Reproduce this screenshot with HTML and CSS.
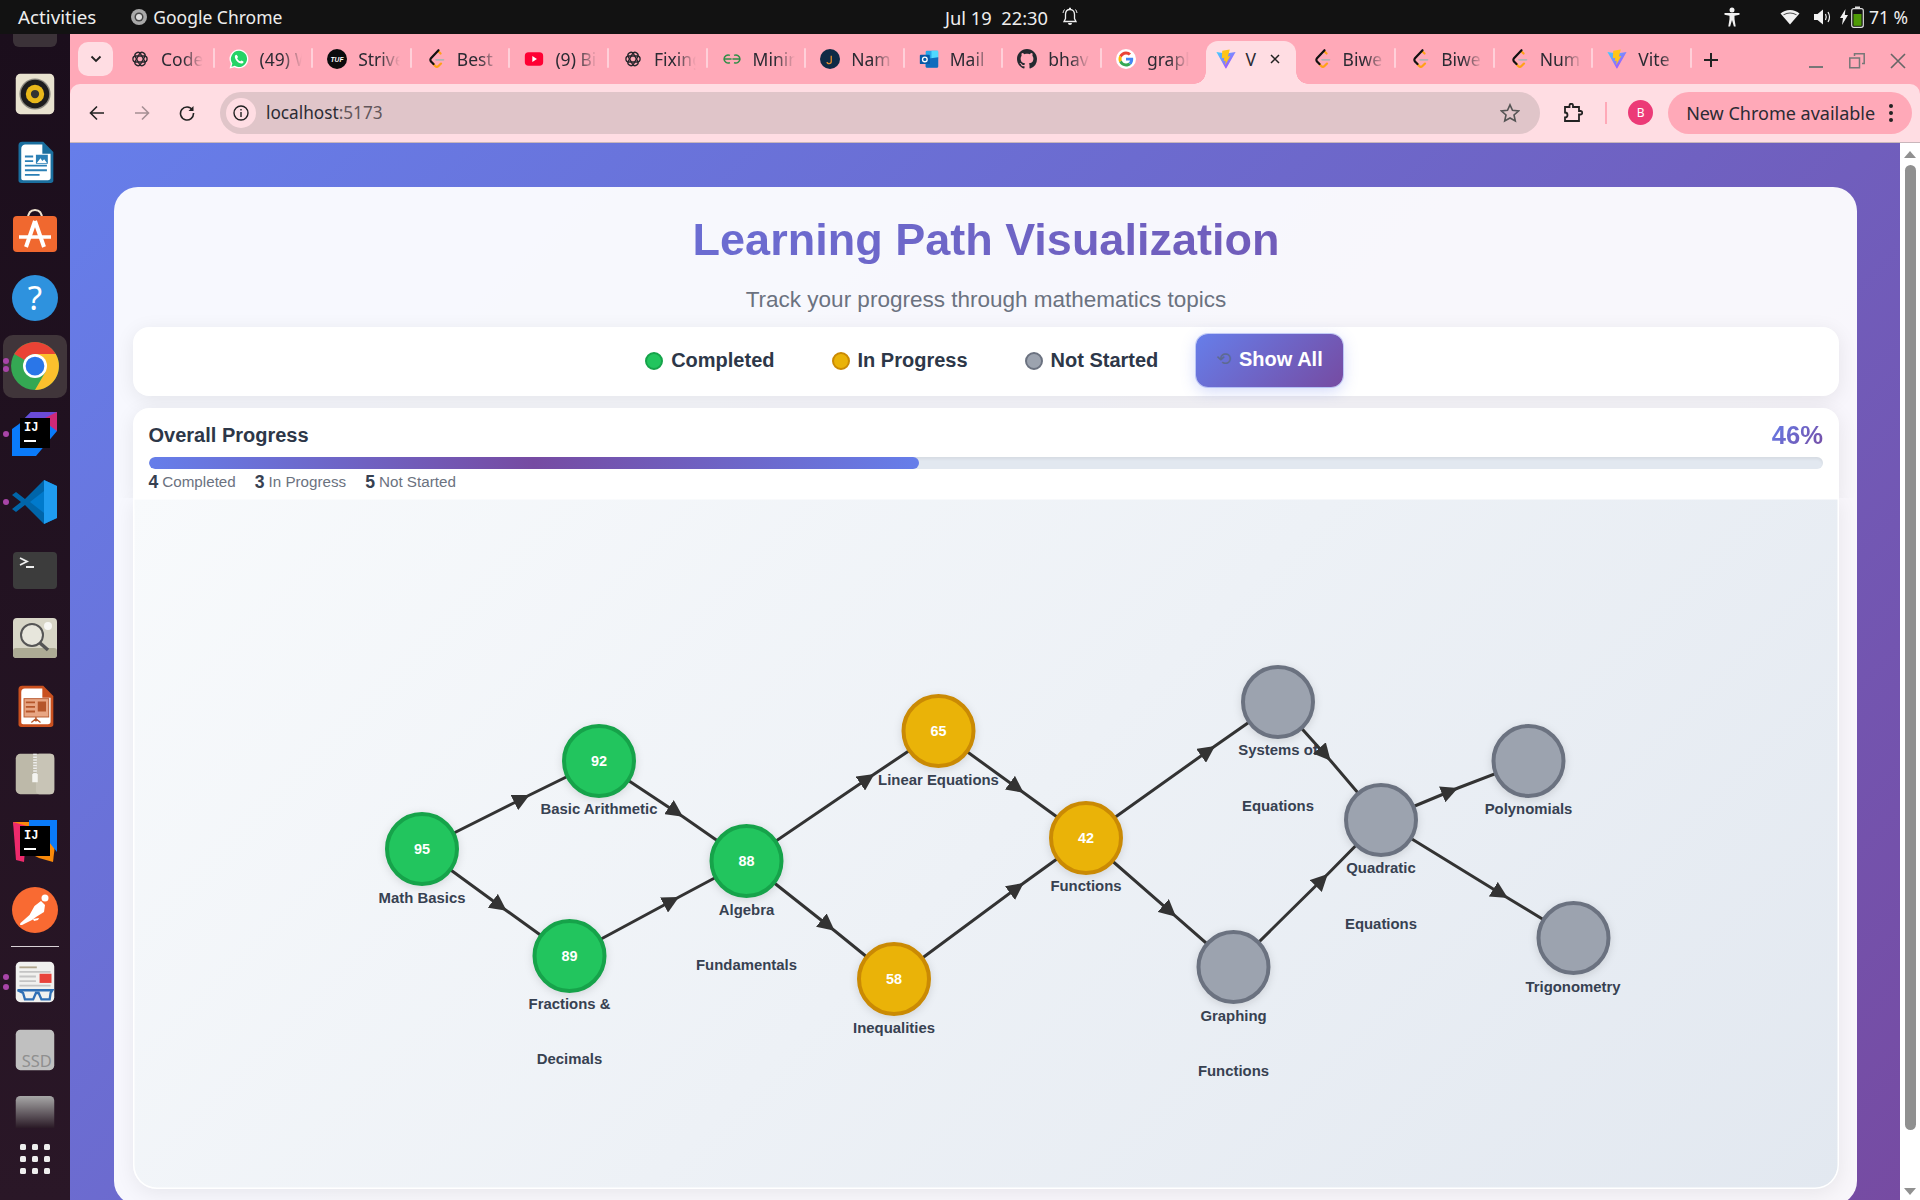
FILE: index.html
```html
<!DOCTYPE html>
<html lang="en">
<head>
<meta charset="utf-8">
<title>Learning Path Visualization</title>
<link rel="stylesheet" href="styles.css">
</head>
<body>
<svg class="defs" width="0" height="0" aria-hidden="true">
  <defs>
    <linearGradient id="viteG" x1="0" y1="0" x2="1" y2="1"><stop offset="0" stop-color="#41d1ff"/><stop offset="1" stop-color="#bd34fe"/></linearGradient>
    <symbol id="i-openai" viewBox="0 0 24 24"><g fill="none" stroke="#26262b" stroke-width="1.700"><rect x="2.500" y="8" width="19" height="8" rx="4"/><rect x="2.500" y="8" width="19" height="8" rx="4" transform="rotate(60 12 12)"/><rect x="2.500" y="8" width="19" height="8" rx="4" transform="rotate(120 12 12)"/></g></symbol>
    <symbol id="i-wa" viewBox="0 0 24 24"><path fill="#fff" d="M12 .6A11.300 11.300 0 0 0 2.300 17.700L.7 23.400l5.900-1.500A11.300 11.300 0 1 0 12 .6z"/><path fill="#25d366" d="M12 2.200a9.700 9.700 0 0 0-8 15.200L3 21.200l3.900-1A9.700 9.700 0 1 0 12 2.200z"/><path fill="#fff" d="M8.700 6.800c-.6 0-1.700.8-1.700 2.500 0 3 3.700 7.800 7.800 8.200 1.700 0 2.700-1.100 2.700-2.200 0-.5-2.200-1.600-2.700-1.600s-1 1-1.500 1c-1 0-3-2-3.500-3.500 0-.5 1-1 1-1.500S9.300 6.800 8.700 6.800z"/></symbol>
    <symbol id="i-tuf" viewBox="0 0 24 24"><circle cx="12" cy="12" r="12" fill="#0b0b0d"/><text class="tuf" x="12" y="15">TUF</text></symbol>
    <symbol id="i-lc" viewBox="0 0 24 24"><g fill="none" stroke-width="2.600" stroke-linecap="round"><path stroke="#ffa116" d="M15 3l2.500 2.500"/><path stroke="#ffa116" d="M9 18l2 2.500q2 2 4 0l3-3"/><path stroke="#b3b3b3" stroke-width="2" d="M12 13h9"/><path stroke="#111" d="M15 1.500L6 11q-1.500 2 0 4l3 3"/></g></symbol>
    <symbol id="i-yt" viewBox="0 0 24 24"><rect x="1" y="4" width="22" height="16" rx="4.500" fill="#ff0033"/><path fill="#fff" d="M10 8.500l5.500 3.500-5.500 3.500z"/></symbol>
    <symbol id="i-gfg" viewBox="0 0 24 24"><path fill="none" stroke="#2f8d46" stroke-width="1.800" d="M11.500 12H2.500a4.800 4.800 0 0 1 7-4.300M2.500 12a4.800 4.800 0 0 0 7 4.300M12.500 12h9a4.800 4.800 0 0 0-7-4.300M21.500 12a4.800 4.800 0 0 1-7 4.300"/></symbol>
    <symbol id="i-nam" viewBox="0 0 24 24"><circle cx="12" cy="12" r="12" fill="#0f2b46"/><path fill="none" stroke="#e08a2c" stroke-width="1.600" d="M13.500 8v7q0 2.500-2.500 2.500T8.500 15.500"/></symbol>
    <symbol id="i-out" viewBox="0 0 24 24"><rect x="8" y="2" width="15" height="20" rx="1.500" fill="#28a8ea"/><rect x="15" y="2" width="8" height="10" fill="#50d9ff"/><path fill="#0f6cbd" d="M8 12l15-2v11a1.500 1.500 0 0 1-1.500 1.500H9.500A1.500 1.500 0 0 1 8 21z"/><rect x="1" y="7" width="12" height="11" rx="1" fill="#0a5aa8"/><circle cx="7" cy="12.500" r="2.800" fill="none" stroke="#fff" stroke-width="1.600"/></symbol>
    <symbol id="i-gh" viewBox="0 0 16 16"><path fill="#24292f" d="M8 0C3.580 0 0 3.580 0 8c0 3.540 2.290 6.530 5.470 7.590.4.070.55-.17.55-.38 0-.19-.01-.82-.01-1.490-2.010.37-2.530-.49-2.690-.94-.09-.23-.48-.94-.82-1.130-.28-.15-.68-.52-.01-.53.63-.01 1.080.58 1.230.82.72 1.210 1.870.87 2.330.66.070-.52.28-.87.51-1.070-1.780-.2-3.640-.89-3.640-3.950 0-.87.31-1.590.82-2.150-.08-.2-.36-1.020.08-2.120 0 0 .67-.21 2.200.82.64-.18 1.320-.27 2-.27.68 0 1.360.09 2 .27 1.530-1.040 2.200-.82 2.200-.82.44 1.100.16 1.920.08 2.120.51.56.82 1.270.82 2.150 0 3.070-1.870 3.750-3.650 3.950.29.25.54.73.54 1.480 0 1.070-.01 1.930-.01 2.200 0 .21.15.46.55.38A8.013 8.013 0 0 0 16 8c0-4.420-3.580-8-8-8z"/></symbol>
    <symbol id="i-g" viewBox="-8 -8 64 64"><circle cx="24" cy="24" r="32" fill="#fff"/><path fill="#EA4335" d="M24 9.500c3.540 0 6.710 1.220 9.210 3.600l6.850-6.850C35.900 2.380 30.470 0 24 0 14.620 0 6.510 5.380 2.560 13.220l7.980 6.190C12.430 13.720 17.740 9.500 24 9.500z"/><path fill="#4285F4" d="M46.980 24.550c0-1.570-.15-3.090-.38-4.550H24v9.020h12.940c-.58 2.960-2.260 5.480-4.780 7.180l7.730 6c4.510-4.180 7.090-10.360 7.090-17.650z"/><path fill="#FBBC05" d="M10.530 28.590c-.48-1.450-.76-2.990-.76-4.590s.27-3.140.76-4.590l-7.980-6.190C.92 16.460 0 20.120 0 24c0 3.880.92 7.540 2.560 10.780l7.970-6.190z"/><path fill="#34A853" d="M24 48c6.480 0 11.930-2.130 15.890-5.810l-7.730-6c-2.150 1.450-4.920 2.300-8.160 2.300-6.260 0-11.570-4.220-13.470-9.910l-7.980 6.190C6.510 42.620 14.620 48 24 48z"/></symbol>
    <symbol id="i-vite" viewBox="0 0 24 24"><path fill="url(#viteG)" d="M.5 3.500L10 5l2 .3L23.500 3.500 12.400 23a.6.6 0 0 1-1 0z"/><path fill="#ffc517" d="M16.500.5L7.500 2.200 7 11l3-.5-.8 4 2.500-.5-.9 5.500 6.400-11-3 .5 1.200-4z"/></symbol>
  </defs>
</svg>

<div class="screen">
  <header class="topbar">
    <div class="top-left">
      <span class="activities">Activities</span>
      <span class="appname">
        <svg class="appicon" viewBox="0 0 16 16"><circle cx="8" cy="8" r="8" fill="#a8a8a8"/><circle cx="8" cy="8" r="4.500" fill="#444"/><circle cx="8" cy="8" r="3" fill="#ddd"/></svg>
        Google Chrome
      </span>
    </div>
    <div class="top-center">
      <span>Jul 19&nbsp; 22:30</span>
      <svg class="bell" viewBox="0 0 18 20"><path fill="none" stroke="#eee" stroke-width="1.300" d="M9 2.500c-3 0-4.500 2.200-4.500 5v4L3 14.500h12l-1.500-3v-4c0-2.800-1.500-5-4.500-5z"/><path fill="#eee" d="M7 16h4a2 2 0 0 1-4 0zM8 .8h2v1.700H8z"/><path fill="none" stroke="#eee" d="M2 6q.3-2 1.500-3.500M16 6q-.3-2-1.500-3.500"/></svg>
    </div>
    <div class="top-right">
      <svg class="tray-a" viewBox="0 0 18 20"><circle cx="9" cy="3" r="2.500" fill="#f2f2f2"/><path fill="#f2f2f2" d="M1.500 6h15v1.800l-5 1v3.200l1.200 7.500h-1.800L9 13l-1.900 6.500H5.300L6.500 12V8.800l-5-1z"/></svg>
      <svg class="tray-w" viewBox="0 0 20 16"><path fill="#f2f2f2" d="M10 15.500L.5 4.500Q4.500 1 10 1t9.500 3.500z"/><path fill="#111" d="M10 3.500q-3.800 0-6.800 2l.6.700Q6.500 4.600 10 4.600t6.200 1.600l.6-.7q-3-2-6.800-2z" opacity=".7"/></svg>
      <svg class="tray-s" viewBox="0 0 20 18"><path fill="#f2f2f2" d="M1 6h3.500L10 1.500v15L4.500 12H1z"/><path fill="none" stroke="#f2f2f2" stroke-width="1.200" d="M12.500 6q1.500 3 0 6M15 4q3 5 0 10"/></svg>
      <span class="battery">
        <svg class="bolt" viewBox="0 0 8 16"><path fill="#f2f2f2" d="M5.500 0L0 9h3l-1 7 6-10H4.800z"/></svg>
        <svg class="batt" viewBox="0 0 13 22"><rect x=".7" y="2.700" width="11.600" height="18.600" rx="2" fill="none" stroke="#ddd" stroke-width="1.200"/><rect x="4" y=".5" width="5" height="2" fill="#ddd"/><rect x="2.500" y="8" width="8" height="11.800" fill="#4e9a06"/></svg>
        <span>71 %</span>
      </span>
    </div>
  </header>

  <nav class="dock">
    <div class="dock-stub"></div>
    <div class="dock-item"><svg class="dock-icon" viewBox="0 0 48 48"><rect x="3" y="2" width="42" height="44" rx="5" fill="#e8e2cf"/><circle cx="24" cy="24" r="17" fill="#8d8a80"/><circle cx="24" cy="24" r="15.500" fill="#1d1d1d"/><circle cx="24" cy="24" r="10" fill="#e8b81a"/><circle cx="24" cy="24" r="4.500" fill="#333"/></svg></div>
    <div class="dock-item"><svg class="dock-icon" viewBox="0 0 48 48"><path fill="#1a6e9e" d="M6 6a4 4 0 0 1 4-4h23l11 11v31a3 3 0 0 1-3 3H9a3 3 0 0 1-3-3z"/><path fill="#fff" d="M9 10a5 5 0 0 1 4-5h19v10h9v26a3 3 0 0 1-3 3H11a2 2 0 0 1-2-2z"/><path fill="#2a7fb5" d="M13 17h9v2h-9zM13 22h9v2h-9zM13 27h24v2H13zM13 32h24v2H13zM13 37h16v2H13zM25 16h13v10H25z"/><path fill="#fff" d="M26 25l4-5 2 3 2-2 3 4z"/></svg></div>
    <div class="dock-item"><svg class="dock-icon big" viewBox="0 0 48 48"><path fill="none" stroke="#efe3cf" stroke-width="2" d="M17 13q0-9 7-9t7 9"/><rect x="2" y="10" width="44" height="36" rx="4" fill="#f0682f"/><path fill="none" stroke="#fff" stroke-width="4" d="M24 15L15 41M24 15l9 26"/><path fill="none" stroke="#fff" stroke-width="3.500" d="M8 31h32"/></svg></div>
    <div class="dock-item"><svg class="dock-icon big" viewBox="0 0 48 48"><circle cx="24" cy="24" r="23" fill="#2e92de"/><text class="help" x="24" y="36">?</text></svg></div>
    <div class="dock-item active">
      <span class="pip p1"></span><span class="pip p2"></span>
      <svg class="dock-icon chrome" viewBox="0 0 48 48"><circle cx="24" cy="24" r="23" fill="#34a853"/><path fill="#fbc02d" d="M24 12.500h19.900A23 23 0 0 1 24 47l10-17.300z"/><path fill="#ea4335" d="M4.100 12.500a23 23 0 0 1 39.800 0H24a11.500 11.500 0 0 0-10 5.800z"/><circle cx="24" cy="24" r="11.500" fill="#fff"/><circle cx="24" cy="24" r="9" fill="#2a76e8"/></svg>
    </div>
    <div class="dock-item"><span class="pip p-one"></span><svg class="dock-icon big" viewBox="0 0 48 48"><path fill="#0a7bfa" d="M8 14L20 2h26v19L25 46H1V19z"/><path fill="#d9256f" d="M20 2h26v19z" opacity=".95"/><path fill="#6a4bd8" d="M14 8L20 2l26 0-12 6z"/><rect x="9" y="8" width="30" height="30" fill="#000"/><text class="ij" x="13" y="21">IJ</text><rect x="13" y="30" width="12" height="2" fill="#fff"/></svg></div>
    <div class="dock-item"><span class="pip p-one"></span><svg class="dock-icon big" viewBox="0 0 48 48"><path fill="#0065a9" d="M33 46l13-6V8L33 2 14 21 5 14 1 17l9 7-9 7 4 3 9-7z"/><path fill="#1f9cf0" d="M33 2l13 6v32l-13 6z"/><path fill="#007acc" d="M33 13L19 24l14 11z"/></svg></div>
    <div class="dock-item"><svg class="dock-icon big" viewBox="0 0 48 48"><rect x="2" y="6" width="44" height="37" rx="4" fill="#3c3c3c"/><path fill="none" stroke="#eee" stroke-width="1.800" d="M9 12l7 3.500-7 3.500M15 21h8"/></svg></div>
    <div class="dock-item"><svg class="dock-icon big" viewBox="0 0 48 48"><rect x="2" y="4" width="44" height="40" rx="4" fill="#d8d6c7"/><rect x="2" y="34" width="44" height="10" rx="3" fill="#adab95"/><circle cx="21" cy="21" r="11" fill="#e7e6dc" stroke="#555" stroke-width="2"/><path stroke="#555" stroke-width="3.500" d="M29 29l8 7"/><circle cx="37" cy="12" r="4" fill="#fff" opacity=".8"/></svg></div>
    <div class="dock-item"><svg class="dock-icon" viewBox="0 0 48 48"><path fill="#c9501f" d="M6 6a4 4 0 0 1 4-4h23l11 11v31a3 3 0 0 1-3 3H9a3 3 0 0 1-3-3z"/><path fill="#fff" d="M9 9a4 4 0 0 1 4-4h19v10h9v26a3 3 0 0 1-3 3H11a2 2 0 0 1-2-2z"/><rect x="12" y="16" width="27" height="20" fill="#e8a684" stroke="#b5562b"/><path fill="#b5562b" d="M14 19h10v2H14zM14 24h10v2H14zM14 29h10v2H14zM27 19h9v11h-9z"/><path stroke="#b5562b" stroke-width="1.500" d="M25 36v5M25 38l-5 4M25 38l5 4"/></svg></div>
    <div class="dock-item"><svg class="dock-icon" viewBox="0 0 48 48"><rect x="3" y="2" width="42" height="44" rx="5" fill="#bdb9a9"/><rect x="25" y="2" width="20" height="44" rx="4" fill="#c8c4b6"/><path stroke="#eee" stroke-width="4" stroke-dasharray="1.500 1.500" d="M24 2v22"/><rect x="21" y="24" width="6" height="9" fill="#f4f4f0"/></svg></div>
    <div class="dock-item"><svg class="dock-icon big" viewBox="0 0 48 48"><path fill="#f98a0b" d="M2 4h18l26 6-4 34-14-4-20-10z"/><path fill="#ee2a6c" d="M2 4l14 4-3 36-8-2z"/><path fill="#0a7bfa" d="M18 2h28v32l-8-10-20-6z"/><rect x="9" y="8" width="30" height="30" fill="#000"/><text class="ij" x="13" y="21">IJ</text><rect x="13" y="30" width="12" height="2" fill="#fff"/></svg></div>
    <div class="dock-item"><svg class="dock-icon big" viewBox="0 0 48 48"><circle cx="24" cy="24" r="23" fill="#f96a32"/><circle cx="34" cy="12" r="3.500" fill="#fff"/><path fill="#fff" d="M30 15l4 4-1 7-8 5-4 3-10 5q-3 .5-1.500-2l9-8 5-9z"/><path fill="#fff" d="M22 33l6-1-1 2-4 1z"/></svg></div>
    <div class="dock-sep"></div>
    <div class="dock-item">
      <span class="pip p3"></span><span class="pip p4"></span>
      <svg class="dock-icon" viewBox="0 0 48 48"><rect x="3" y="2" width="42" height="44" rx="5" fill="#f1f1ef"/><path fill="#b0a58c" d="M7 7h19v2H7z"/><path fill="#c4c4c4" d="M7 12h34v2H7zM7 17h18v2H7zM7 22h18v2H7zM7 27h34v2H7z"/><rect x="29" y="15" width="13" height="10" fill="#e8423a"/><path fill="none" stroke="#2f6fb5" stroke-width="2.500" d="M5 33h38l-2 3-1 7h-9l-3-7h-3l-3 7H13l-2-7z"/></svg>
    </div>
    <div class="dock-item"><svg class="dock-icon" viewBox="0 0 48 48"><rect x="3" y="2" width="42" height="44" rx="5" fill="#c0c0c0"/><text class="ssd" x="26" y="43">SSD</text></svg></div>
    <div class="dock-fade"><svg class="dock-icon fade" viewBox="0 0 48 36"><defs><linearGradient id="fadeG" x1="0" y1="0" x2="0" y2="1"><stop offset="0" stop-color="#a8a8a8"/><stop offset="1" stop-color="#2a1a26"/></linearGradient></defs><path fill="url(#fadeG)" d="M3 36V6a5 5 0 0 1 5-5h32a5 5 0 0 1 5 5v30z"/></svg></div>
    <div class="dock-grid"><i></i><i></i><i></i><i></i><i></i><i></i><i></i><i></i><i></i></div>
  </nav>

  <main class="window">
    <div class="tabstrip">
      <button class="tab-list"><svg viewBox="0 0 12 8"><path fill="none" stroke="#222" stroke-width="1.800" d="M1.500 1.500L6 6l4.500-4.500"/></svg></button>
      <div class="tabs">
        <div class="tab"><svg class="fav"><use href="#i-openai"/></svg><span class="tab-title">Code</span></div>
        <div class="tab"><svg class="fav big"><use href="#i-wa"/></svg><span class="tab-title">(49) W</span></div>
        <div class="tab"><svg class="fav big"><use href="#i-tuf"/></svg><span class="tab-title">Strive</span></div>
        <div class="tab"><svg class="fav big"><use href="#i-lc"/></svg><span class="tab-title">Best</span></div>
        <div class="tab"><svg class="fav big"><use href="#i-yt"/></svg><span class="tab-title">(9) Bi</span></div>
        <div class="tab"><svg class="fav"><use href="#i-openai"/></svg><span class="tab-title">Fixing</span></div>
        <div class="tab"><svg class="fav big"><use href="#i-gfg"/></svg><span class="tab-title">Minin</span></div>
        <div class="tab"><svg class="fav big"><use href="#i-nam"/></svg><span class="tab-title">Nam</span></div>
        <div class="tab"><svg class="fav big"><use href="#i-out"/></svg><span class="tab-title">Mail</span></div>
        <div class="tab"><svg class="fav big"><use href="#i-gh"/></svg><span class="tab-title">bhav</span></div>
        <div class="tab last"><svg class="fav big"><use href="#i-g"/></svg><span class="tab-title">graph</span></div>
        <div class="tab active"><svg class="fav big"><use href="#i-vite"/></svg><span class="tab-title">V</span><svg class="tab-x" viewBox="0 0 10 10"><path stroke="#222" stroke-width="1.500" d="M1 1l8 8M9 1l-8 8"/></svg></div>
        <div class="tab"><svg class="fav big"><use href="#i-lc"/></svg><span class="tab-title">Biwe</span></div>
        <div class="tab"><svg class="fav big"><use href="#i-lc"/></svg><span class="tab-title">Biwe</span></div>
        <div class="tab"><svg class="fav big"><use href="#i-lc"/></svg><span class="tab-title">Num</span></div>
        <div class="tab"><svg class="fav big"><use href="#i-vite"/></svg><span class="tab-title">Vite</span></div>
      </div>
      <svg class="newtab" viewBox="0 0 14 14"><path stroke="#222" stroke-width="2" d="M7 0v14M0 7h14"/></svg>
      <div class="winctl">
        <svg viewBox="0 0 16 16"><path stroke="#777" stroke-width="2" d="M1 14h14"/></svg>
        <svg viewBox="0 0 16 16"><path fill="none" stroke="#777" stroke-width="1.500" d="M5.500 3V.8h9.700v9.700H13M.8 5h9.700v9.700H.8z"/></svg>
        <svg viewBox="0 0 16 16"><path stroke="#666" stroke-width="1.600" d="M1 1l14 14M15 1L1 15"/></svg>
      </div>
    </div>
    <div class="toolbar">
      <div class="navs">
        <svg viewBox="0 0 16 16"><path fill="none" stroke="#222" stroke-width="1.600" d="M15 8H1.500M8 1.500L1.500 8 8 14.500"/></svg>
        <svg viewBox="0 0 16 16"><path fill="none" stroke="#a58f94" stroke-width="1.600" d="M1 8h13.500M8 1.500L14.500 8 8 14.500"/></svg>
        <svg viewBox="0 0 16 16"><path fill="none" stroke="#222" stroke-width="1.600" d="M13.500 5A6.500 6.500 0 1 0 14.500 8"/><path fill="#222" d="M14.500 1v5h-5z"/></svg>
      </div>
      <div class="omnibox">
        <span class="site-info"><svg viewBox="0 0 16 16"><circle cx="8" cy="8" r="7" fill="none" stroke="#222" stroke-width="1.400"/><path fill="#222" d="M7.300 7h1.400v5H7.300zM7.300 4h1.400v1.500H7.300z"/></svg></span>
        <span class="url">localhost<span class="port">:5173</span></span>
        <svg class="star" viewBox="0 0 20 20"><path fill="none" stroke="#555" stroke-width="1.600" d="M10 1.800l2.500 5.500 6 .7-4.500 4 1.300 6L10 15l-5.300 3 1.300-6-4.500-4 6-.7z"/></svg>
      </div>
      <svg class="ext" viewBox="0 0 20 20"><path fill="none" stroke="#222" stroke-width="1.800" d="M2 4h4.500V2.500a1.500 1.500 0 0 1 3.500 0V4h6v4h1.500a1.500 1.500 0 0 1 0 3.500H16V18H2v-3.500a2.500 2.500 0 0 0 0-5z"/></svg>
      <span class="tb-sep"></span>
      <span class="avatar">B</span>
      <span class="update">New Chrome available<svg class="kebab" viewBox="0 0 4 18"><circle cx="2" cy="2" r="2" fill="#222"/><circle cx="2" cy="9" r="2" fill="#222"/><circle cx="2" cy="16" r="2" fill="#222"/></svg></span>
    </div>

    <div class="viewport">
      <div class="page">
        <section class="panel">
          <h1 class="title">Learning Path Visualization</h1>
          <p class="subtitle">Track your progress through mathematics topics</p>

          <div class="legend">
            <div class="legend-items">
              <span class="legend-item"><i class="dot done"></i>Completed</span>
              <span class="legend-item"><i class="dot prog"></i>In Progress</span>
              <span class="legend-item"><i class="dot none"></i>Not Started</span>
            </div>
            <button class="show-all"><span class="reset">⟲</span>Show All</button>
          </div>

          <div class="progress">
            <div class="progress-head">
              <span class="progress-title">Overall Progress</span>
              <span class="progress-pct">46%</span>
            </div>
            <div class="track"><div class="fill" style="width:46%"></div></div>
            <div class="stats">
              <span class="stat"><b>4</b>Completed</span>
              <span class="stat"><b>3</b>In Progress</span>
              <span class="stat"><b>5</b>Not Started</span>
            </div>
          </div>

          <div class="canvas">
            <svg class="graph" viewBox="133 498 1706 691">
              <defs>
                <marker id="arrow" viewBox="0 -5 10 10" refX="10" refY="0" markerUnits="userSpaceOnUse" markerWidth="17" markerHeight="17" orient="auto"><path d="M0-5L10 0 0 5z" fill="#333"/></marker>
              </defs>
              <g class="labels">
                <text x="422" y="903">Math Basics</text>
                <text x="599" y="814">Basic Arithmetic</text>
                <text x="569.500" y="1009">Fractions &amp;</text>
                <text x="569.500" y="1064">Decimals</text>
                <text x="746.500" y="915">Algebra</text>
                <text x="746.500" y="970">Fundamentals</text>
                <text x="938.500" y="785">Linear Equations</text>
                <text x="894" y="1033">Inequalities</text>
                <text x="1086" y="891">Functions</text>
                <text x="1278" y="755">Systems of</text>
                <text x="1278" y="811">Equations</text>
                <text x="1233.500" y="1021">Graphing</text>
                <text x="1233.500" y="1076">Functions</text>
                <text x="1381" y="873">Quadratic</text>
                <text x="1381" y="929">Equations</text>
                <text x="1528.500" y="814">Polynomials</text>
                <text x="1573" y="992">Trigonometry</text>
              </g>
              <g class="edges" marker-mid="url(#arrow)">
                <polyline points="422,849 529.600,795 599,761"/>
                <polyline points="422,849 506.600,910.700 569.500,956"/>
                <polyline points="599,761 683,816.700 746.500,861"/>
                <polyline points="569.500,956 679,897 746.500,861"/>
                <polyline points="746.500,861 874.400,774 938.500,731"/>
                <polyline points="746.500,861 834.600,930.700 894,979"/>
                <polyline points="938.500,731 1023.700,792.700 1086,838"/>
                <polyline points="894,979 1023.700,883 1086,838"/>
                <polyline points="1086,838 1215,746 1278,702"/>
                <polyline points="1086,838 1176,916.700 1233.500,967"/>
                <polyline points="1278,702 1330.600,760.700 1381,820"/>
                <polyline points="1233.500,967 1327.800,874 1381,820"/>
                <polyline points="1381,820 1458,788 1528.500,761"/>
                <polyline points="1381,820 1507.800,898 1573.500,938"/>
              </g>
              <g class="nodes">
                <circle class="done" cx="422" cy="849" r="35"/><text x="422" y="854">95</text>
                <circle class="done" cx="599" cy="761" r="35"/><text x="599" y="766">92</text>
                <circle class="done" cx="569.500" cy="956" r="35"/><text x="569.500" y="961">89</text>
                <circle class="done" cx="746.500" cy="861" r="35"/><text x="746.500" y="866">88</text>
                <circle class="prog" cx="938.500" cy="731" r="35"/><text x="938.500" y="736">65</text>
                <circle class="prog" cx="894" cy="979" r="35"/><text x="894" y="984">58</text>
                <circle class="prog" cx="1086" cy="838" r="35"/><text x="1086" y="843">42</text>
                <circle class="none" cx="1278" cy="702" r="35"/>
                <circle class="none" cx="1233.500" cy="967" r="35"/>
                <circle class="none" cx="1381" cy="820" r="35"/>
                <circle class="none" cx="1528.500" cy="761" r="35"/>
                <circle class="none" cx="1573.500" cy="938" r="35"/>
              </g>
            </svg>
          </div>
        </section>
      </div>
      <aside class="scrollbar">
        <i class="arrow-up"></i>
        <i class="thumb"></i>
        <i class="arrow-down"></i>
      </aside>
    </div>
  </main>
</div>
</body>
</html>
```

FILE: styles.css
```css
* { box-sizing: border-box; }
html, body { margin: 0; height: 100%; overflow: hidden; }
body { font-family: "Liberation Sans", Arial, sans-serif; }
.defs { position: absolute; }

.screen {
  width: 1920px; height: 1200px;
  display: grid;
  grid-template-columns: 70px 1fr;
  grid-template-rows: 34px 1fr;
  overflow: hidden;
}

/* top bar */
.topbar {
  grid-column: 1 / 3;
  background: #121212;
  color: #eee;
  font: 17.500px "Noto Sans", sans-serif;
  display: grid;
  grid-template-columns: 1fr auto 1fr;
  align-items: center;
  padding: 0 12px 0 18px;
}
.top-left { display: flex; align-items: center; gap: 35px; }
.activities { font-size: 18.800px; }
.appname { display: flex; align-items: center; gap: 6px; }
.appicon { width: 16px; height: 16px; }
.top-center { display: flex; align-items: center; gap: 13px; margin-left: 98px; font-size: 18.300px; }
.bell { width: 18px; height: 20px; }
.top-right { display: flex; align-items: center; justify-content: flex-end; }
.tray-a { width: 18px; height: 20px; margin-right: 39px; }
.tray-w { width: 20px; height: 16px; margin-right: 13px; }
.tray-s { width: 20px; height: 18px; margin-right: 7px; }
.battery { display: flex; align-items: center; gap: 3px; }
.bolt { width: 8px; height: 16px; }
.batt { width: 13px; height: 22px; margin-right: 2px; }

/* dock */
.dock {
  background: linear-gradient(180deg, #1b0e1c, #2a1727);
  display: flex;
  flex-direction: column;
  align-items: stretch;
  overflow: hidden;
}
.dock-stub { height: 26px; }
.dock-stub::before {
  content: ""; display: block;
  width: 44px; height: 13px; margin: 0 auto;
  background: #3b3238; border-radius: 0 0 6px 6px;
}
.dock-item { height: 68px; position: relative; display: flex; align-items: center; justify-content: center; flex: none; }
.dock-item.active::before {
  content: ""; position: absolute; inset: 3px 3px 2px 3px;
  background: #40353a; border-radius: 10px;
}
.dock-icon { width: 44px; height: 44px; position: relative; }
.dock-icon.big { width: 48px; height: 48px; }
.dock-icon.chrome { width: 50px; height: 50px; }
.pip { position: absolute; left: 3px; width: 6px; height: 6px; border-radius: 50%; background: #a845a8; z-index: 1; }
.p1 { top: 26px; } .p2 { top: 34px; }
.p-one { top: 31px; }
.p3 { top: 26px; } .p4 { top: 36px; }
.dock-sep { height: 1px; background: #d8d2d6; margin: 2px 11px 1px; flex: none; }
.dock-fade { height: 44px; display: flex; justify-content: center; align-items: flex-end; flex: none; }
.dock-icon.fade { width: 44px; height: 33px; }
.dock-grid {
  margin: 16px auto 0;
  display: grid; grid-template-columns: repeat(3, 6px); gap: 6px;
  flex: none;
}
.dock-grid i { width: 6px; height: 6px; background: #eee; border-radius: 1.500px; }
.help { font: 400 33px "Noto Sans", sans-serif; fill: #fff; text-anchor: middle; }
.ij { font: 700 12px "Liberation Mono", monospace; fill: #fff; }
.ssd { font: 18px "Noto Sans", sans-serif; fill: #8f8f8f; text-anchor: middle; }
.tuf { font: italic 700 8px "Liberation Sans", sans-serif; fill: #fff; text-anchor: middle; }

/* browser chrome */
.window { display: flex; flex-direction: column; min-width: 0; min-height: 0; background: #ffa9b8; }
.tabstrip {
  height: 50px; background: #ffa9b8;
  display: flex; align-items: flex-end;
  font: 17.500px "Noto Sans", sans-serif; color: #2b2b33;
  flex: none;
}
.tab-list {
  width: 35px; height: 34px; margin: 0 3px 8px 8px;
  background: #ffdde3; border: 0; border-radius: 10px; padding: 0;
  display: flex; align-items: center; justify-content: center;
}
.tab-list svg { width: 12px; height: 8px; }
.tabs { display: flex; align-items: flex-end; height: 43px; }
.tab {
  width: 98.600px; height: 43px; flex: none;
  display: flex; align-items: center;
  padding: 0 2px 7px 15px; gap: 12px;
  position: relative;
}
.tab::after {
  content: ""; position: absolute; right: 0; top: 7px;
  width: 2px; height: 20px; background: #ffd0d9; border-radius: 1px;
}
.tab.last::after { display: none; }
.tab.active { width: 90px; background: #ffdde3; border-radius: 12px 12px 0 0; padding: 0 16px 7px 11px; gap: 11px; margin: 0 2px 0 5px; }
.tab.active::after {
  right: -12px; top: auto; bottom: 0; width: 12px; height: 12px; border-radius: 0;
  background: radial-gradient(circle at 100% 0, transparent 11.500px, #ffdde3 12px);
}
.tab.active::before {
  content: ""; position: absolute; left: -12px; bottom: 0; width: 12px; height: 12px;
  background: radial-gradient(circle at 0 0, transparent 11.500px, #ffdde3 12px);
}
.fav { width: 18px; height: 18px; flex: none; }
.fav.big { width: 20px; height: 20px; margin-left: -1px; margin-right: -1px; }
.tab-title {
  flex: 1; min-width: 0; white-space: nowrap;
  mask-image: linear-gradient(90deg, #000 22px, transparent 42px);
  line-height: 24px;
}
.tab.active .tab-title { mask-image: none; }
.tab-x { width: 10px; height: 10px; flex: none; }
.newtab { width: 14px; height: 14px; margin: 0 0 17px 12px; flex: none; }
.winctl { margin-left: auto; display: flex; gap: 25px; margin-bottom: 15px; padding-right: 14px; }
.winctl svg { width: 16px; height: 16px; }

.toolbar {
  height: 59px; background: #ffdde3;
  border-radius: 10px 10px 0 0;
  border-bottom: 1px solid #c9b6bb;
  display: flex; align-items: center;
  padding: 0 8px 1px 0;
  font: 17.200px "Noto Sans", sans-serif; color: #2b2b33;
  flex: none;
}
.navs { display: flex; gap: 29px; padding-left: 19px; }
.navs svg { width: 16px; height: 16px; }
.omnibox {
  margin-left: 25px;
  width: 1321px; height: 42px; background: #e0c5c9; border-radius: 21px;
  display: flex; align-items: center; padding: 0 20px 0 6px;
}
.site-info { width: 30px; height: 30px; border-radius: 50%; background: #ffdde3; display: flex; align-items: center; justify-content: center; }
.site-info svg { width: 16px; height: 16px; }
.url { margin-left: 10px; flex: 1; }
.port { color: #62565a; }
.star { width: 20px; height: 20px; }
.ext { width: 20px; height: 20px; margin-left: 23px; }
.tb-sep { width: 2px; height: 22px; background: #ffa9b8; margin-left: 22px; }
.avatar {
  width: 25px; height: 25px; margin-left: 21px; border-radius: 50%;
  background: #ec3a77; color: #fff; font-size: 12px;
  display: flex; align-items: center; justify-content: center;
}
.update {
  margin-left: 15px; height: 42px; width: 244px;
  background: #ffa9b8; border-radius: 21px;
  display: flex; align-items: center; justify-content: space-between;
  padding: 0 19px 0 18px;
  font-size: 18px;
}
.kebab { width: 4px; height: 18px; }

/* page */
.viewport { flex: 1; min-height: 0; display: flex; overflow: hidden; }
.page {
  flex: 1; min-width: 0;
  background: linear-gradient(135deg, #667eea 0%, #764ba2 100%);
  padding: 44px 43px 0 44px;
  overflow: hidden;
}
.panel {
  background: rgba(255,255,255,.95);
  border-radius: 24px;
  padding: 26px 18px 17px 19px;
  height: 1018px;
}
.title {
  margin: 0; text-align: center;
  font-size: 45px; line-height: 54px; font-weight: 700;
  background: linear-gradient(135deg, #667eea, #764ba2);
  -webkit-background-clip: text; background-clip: text;
  color: transparent;
}
.subtitle { margin: 21px 0 15px; text-align: center; font-size: 22.500px; line-height: 24px; color: #6b7280; }

.legend {
  height: 69px; background: #fff; border-radius: 16px;
  box-shadow: 0 4px 20px rgba(0,0,0,.08);
  display: flex; align-items: center; justify-content: center; gap: 37.500px;
  padding: 0 0 3px 16px;
  margin-bottom: 12px;
}
.legend-items { display: flex; gap: 57px; }
.legend-item { display: flex; align-items: center; gap: 8px; padding-top: 1px; font-size: 20px; font-weight: 700; color: #2d3748; }
.dot { width: 18px; height: 18px; border-radius: 50%; border: 2px solid; }
.dot.done { background: #22c55e; border-color: #16a34a; }
.dot.prog { background: #eab308; border-color: #ca8a04; }
.dot.none { background: #9ca3af; border-color: #6b7280; }
.show-all {
  width: 147px; height: 53px; border: 0; border-radius: 12px;
  background: linear-gradient(135deg, #667eea, #764ba2);
  box-shadow: 0 4px 15px rgba(102,126,234,.3), 0 0 0 1px rgba(102,126,234,.35);
  color: #fff; font: 700 20px "Liberation Sans", sans-serif;
  display: flex; align-items: center; justify-content: center; gap: 7px;
  padding: 0 0 2px;
}
.reset { font: 18px "DejaVu Sans", sans-serif; color: #5d6a92; width: 16px; line-height: 20px; }

.progress {
  height: 90px; background: #fff; border-radius: 16px 16px 0 0;
  box-shadow: 0 4px 20px rgba(0,0,0,.08);
  clip-path: inset(-30px -30px 0 -30px);
  padding: 13px 16px 0 15.500px;
  position: relative;
  z-index: 1;
}
.progress-head { display: flex; justify-content: space-between; align-items: center; height: 28px; margin-bottom: 8px; }
.progress-title { font-size: 20px; font-weight: 700; color: #2d3748; }
.progress-pct {
  font-size: 25.600px; font-weight: 700;
  background: linear-gradient(135deg, #667eea, #764ba2);
  -webkit-background-clip: text; background-clip: text; color: transparent;
}
.track { height: 12px; background: #e2e8f0; border-radius: 6px; overflow: hidden; box-shadow: inset 0 2px 3px rgba(0,0,0,.06); }
.fill { height: 100%; border-radius: 6px; background: linear-gradient(90deg, #667eea, #764ba2 50%, #667eea); }
.stats { display: flex; gap: 19px; margin-top: 3px; }
.stat { display: flex; align-items: center; gap: 4px; font-size: 15.200px; color: #6b7280; line-height: 20px; }
.stat b { font-size: 17.600px; color: #374151; }

.canvas {
  height: 691px;
  background: linear-gradient(135deg, #f8fafc, #e2e8f0);
  border-radius: 0 0 24px 24px;
  box-shadow: inset 0 0 0 1.500px #fff, 0 4px 20px rgba(0,0,0,.07);
}
.graph { display: block; width: 100%; height: 100%; }
.labels text { font-size: 14.900px; font-weight: 700; fill: #374151; text-anchor: middle; }
.edges polyline { fill: none; stroke: #333; stroke-width: 3; }
.nodes circle { stroke-width: 4; filter: drop-shadow(0 2px 4px rgba(0,0,0,.12)); }
.nodes .done { fill: #22c55e; stroke: #16a34a; }
.nodes .prog { fill: #eab308; stroke: #ca8a04; }
.nodes .none { fill: #9ca3af; stroke: #6b7280; }
.nodes text { font-size: 14.400px; font-weight: 700; fill: #fff; text-anchor: middle; }

/* scrollbar */
.scrollbar {
  width: 20px; flex: none; background: #fff;
  display: flex; flex-direction: column; align-items: center;
  padding: 8px 0 5px;
}
.arrow-up { width: 0; height: 0; border: 6.500px solid transparent; border-top: 0; border-bottom: 7px solid #909090; }
.thumb { width: 11px; height: 965px; margin-top: 7px; background: #909090; border-radius: 6px; }
.arrow-down { width: 0; height: 0; border: 6.500px solid transparent; border-bottom: 0; border-top: 7px solid #909090; margin-top: auto; }
```
